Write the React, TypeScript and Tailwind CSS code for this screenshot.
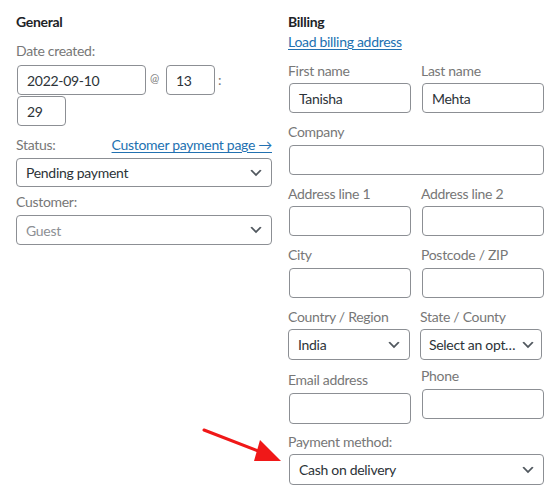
import type { ReactNode } from "react"

function Chevron() {
  return (
    <svg viewBox="0 0 20 20" className="h-4 w-4 shrink-0" fill="#50575e">
      <path d="M5 6l5 5 5-5 2 1-7 7-7-7 2-1z" />
    </svg>
  )
}

function Label({ children, className = "" }: { children: ReactNode; className?: string }) {
  return <div className={`h-5 leading-5 text-[14px] text-[#777] ${className}`}>{children}</div>
}

function Field({ value, className = "" }: { value?: string; className?: string }) {
  return (
    <div
      className={`flex h-[30px] items-center rounded-[4px] border border-[#8c8f94] bg-white px-[9px] text-[14px] text-[#2c3338] ${className}`}
    >
      {value}
    </div>
  )
}

function Select({ value, muted, className = "" }: { value: string; muted?: boolean; className?: string }) {
  return (
    <div
      className={`flex items-center gap-1 rounded-[4px] border border-[#8c8f94] bg-white pl-[9px] pr-[7px] text-[14px] ${
        muted ? "text-[#8c8f94]" : "text-[#2c3338]"
      } ${className}`}
    >
      <span className="min-w-0 flex-1 truncate">{value}</span>
      <Chevron />
    </div>
  )
}

export default function App() {
  return (
    <div className="relative flex h-[490px] w-[555px] gap-4 overflow-hidden bg-white pl-4 font-['Lato',sans-serif] text-[14px] tracking-[-0.3px]">
      {/* General */}
      <div className="w-[256px] pt-3">
        <h3 className="h-5 font-bold leading-5 text-[#1d2327]">General</h3>
        <Label className="mt-[9px]">Date created:</Label>
        <div className="mt-1 flex items-start pl-px">
          <Field value="2022-09-10" className="w-[129px]" />
          <span className="ml-[4px] mr-[7px] mt-[5px] text-[11px] text-[#777]">@</span>
          <Field value="13" className="w-[49px]" />
          <span className="ml-[3px] mt-[4px] text-[#777]">:</span>
        </div>
        <Field value="29" className="ml-px mt-[1px] h-[29px] w-[49px]" />

        <div className="mt-[9px] flex h-5 items-center justify-between">
          <Label>Status:</Label>
          <a className="leading-5 text-[#2271b1] underline underline-offset-2">Customer payment page →</a>
        </div>
        <Select value="Pending payment" className="mt-[3px] h-[29px]" />

        <Label className="mt-[5px]">Customer:</Label>
        <Select value="Guest" muted className="mt-[3px] h-[30px]" />
      </div>

      {/* Billing */}
      <div className="w-[256px] pt-3">
        <h3 className="h-5 font-bold leading-5 text-[#1d2327]">Billing</h3>
        <a className="block h-5 leading-5 text-[#2271b1] underline underline-offset-2">Load billing address</a>

        <div className="mt-[9px] grid grid-cols-2 gap-x-[11px] pl-px">
          <div>
            <Label className="-ml-px">First name</Label>
            <Field value="Tanisha" className="mt-[2px]" />
          </div>
          <div>
            <Label className="-ml-px">Last name</Label>
            <Field value="Mehta" className="mt-[2px]" />
          </div>
        </div>

        <Label className="mt-[9px]">Company</Label>
        <Field className="ml-px mt-[3px]" />

        <div className="mt-[9px] grid grid-cols-2 gap-x-[11px] pl-px">
          <div>
            <Label className="-ml-px">Address line 1</Label>
            <Field className="mt-[2px]" />
          </div>
          <div>
            <Label className="-ml-px">Address line 2</Label>
            <Field className="mt-[2px]" />
          </div>
        </div>

        <div className="mt-[9px] grid grid-cols-2 gap-x-[11px] pl-px">
          <div>
            <Label className="-ml-px">City</Label>
            <Field className="mt-[3px]" />
          </div>
          <div>
            <Label className="-ml-px">Postcode / ZIP</Label>
            <Field className="mt-[3px]" />
          </div>
        </div>

        <div className="mt-[9px] flex gap-[10px]">
          <div className="w-[122px]">
            <Label>Country / Region</Label>
            <Select value="India" className="mt-[2px] h-[31px]" />
          </div>
          <div className="w-[122px]">
            <Label>State / County</Label>
            <Select value="Select an option…" className="mt-[2px] h-[31px] !pl-[8px] !pr-[5px]" />
          </div>
        </div>

        <div className="grid grid-cols-2 items-start gap-x-[11px] pl-px">
          <div className="mt-[10px]">
            <Label className="-ml-px">Email address</Label>
            <Field className="mt-[3px] h-[31px]" />
          </div>
          <div className="mt-[6px]">
            <Label className="-ml-px">Phone</Label>
            <Field className="mt-[3px]" />
          </div>
        </div>

        <Label className="mt-[8px]">Payment method:</Label>
        <Select value="Cash on delivery" className="ml-px mt-[2px] h-[31px]" />
      </div>

      {/* annotation arrow */}
      <svg className="pointer-events-none absolute left-0 top-0" width="555" height="490">
        <line x1="204" y1="430" x2="266" y2="454" stroke="#f01818" strokeWidth="3" strokeLinecap="round" />
        <polygon points="281,461 260,440 254,461" fill="#f01818" />
      </svg>
    </div>
  )
}
